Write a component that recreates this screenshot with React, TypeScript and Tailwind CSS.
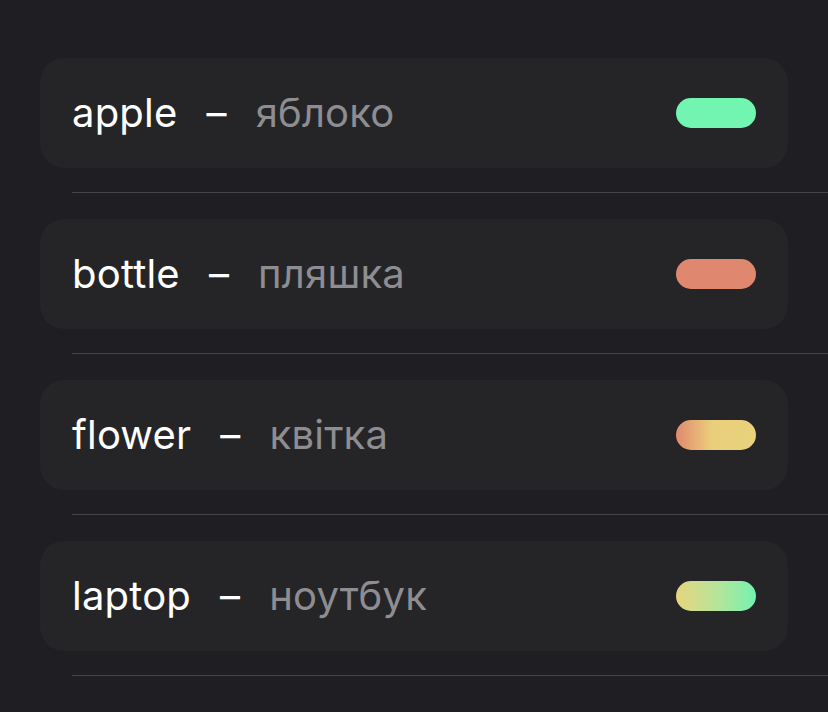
const words = [
  { en: "apple", ua: "яблоко", pill: "bg-[#72f5b0]" },
  { en: "bottle", ua: "пляшка", pill: "bg-[#e0886f]" },
  { en: "flower", ua: "квітка", pill: "bg-gradient-to-r from-[#e0886f] via-[#e9cf7b] via-45% to-[#e9d27c]" },
  { en: "laptop", ua: "ноутбук", pill: "bg-gradient-to-r from-[#e6d47e] to-[#6ff2b0]" },
];

export default function App() {
  return (
    <div className="min-h-[712px] w-full bg-[#1f1e23] pt-[58px] font-['Inter',sans-serif]">
      {words.map((w) => (
        <div key={w.en}>
          <div className="mx-10 flex h-[110px] items-center justify-between rounded-[24px] bg-[#252527] pl-8 pr-8">
            <div className="flex items-center gap-[29px] text-[40px] leading-none tracking-[0.2px]">
              <span className="text-white">{w.en}</span>
              <span className="text-white">–</span>
              <span className="text-[#8d8d92]">{w.ua}</span>
            </div>
            <div className={`h-[30px] w-20 rounded-full ${w.pill}`} />
          </div>
          <div className="ml-[72px] mt-[24px] mb-[26px] h-px bg-[#45444a]" />
        </div>
      ))}
    </div>
  );
}
